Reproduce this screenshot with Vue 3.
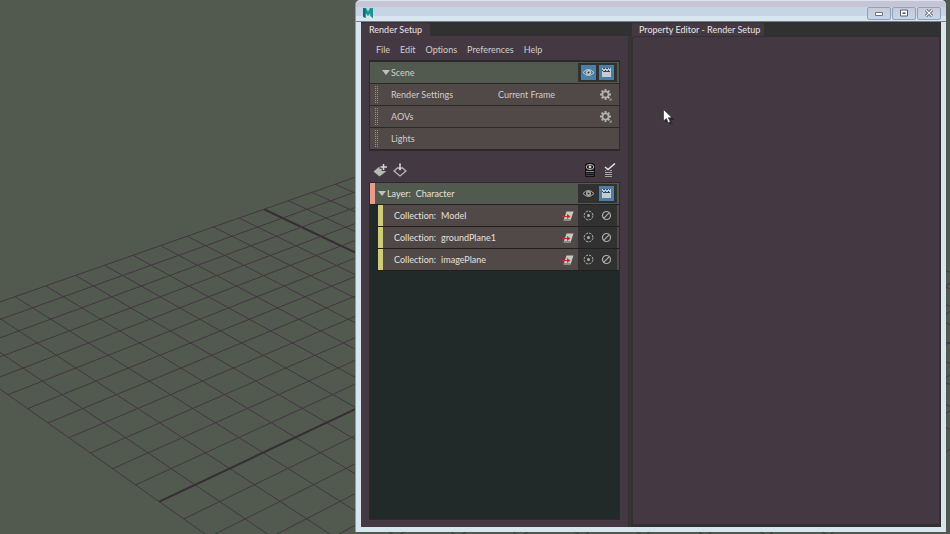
<script setup>
import { ref } from 'vue'

// Ground plane: 24 x 24 units seen in perspective. u and v are unit indices.
function project(u, v) {
  const w = 1 + 0.017195 * u + 0.016437 * v
  const x = (117.25 * u - 64.46 * v + 478) / w / 3
  const y = (-33.33 * u - 33.79 * v + 1055) / w / 3 + 150
  return [x, y]
}

function segment(u1, v1, u2, v2) {
  const [x1, y1] = project(u1, v1)
  const [x2, y2] = project(u2, v2)
  return { x1, y1, x2, y2 }
}

const gridLines = []
for (let i = 0; i <= 24; i++) {
  gridLines.push({ ...segment(i, -12, i, 12), axis: i === 12 })
  gridLines.push({ ...segment(0, i - 12, 24, i - 12), axis: i === 12 })
}

const menus = ['File', 'Edit', 'Options', 'Preferences', 'Help']
const sceneRows = [
  { name: 'Render Settings', value: 'Current Frame', gear: true },
  { name: 'AOVs', value: '', gear: true },
  { name: 'Lights', value: '', gear: false }
]
const collections = ['Model', 'groundPlane1', 'imagePlane']

const sceneOpen = ref(true)
const layerOpen = ref(true)
const sceneVisible = ref(true)
const sceneRenderable = ref(true)
const layerVisible = ref(false)
const layerRenderable = ref(true)
</script>

<template>
  <div class="desktop">
    <svg class="viewport" viewBox="0 0 950 534" preserveAspectRatio="xMinYMin slice" aria-hidden="true">
      <line
        v-for="(l, i) in gridLines"
        :key="i"
        :x1="l.x1"
        :y1="l.y1"
        :x2="l.x2"
        :y2="l.y2"
        :class="{ axis: l.axis }"
      />
    </svg>

    <svg class="defs" width="0" height="0" aria-hidden="true">
      <symbol id="eye" viewBox="0 0 13 13">
        <path d="M1 6.500 Q6.500 0.500 12 6.500 Q6.500 12.500 1 6.500Z" fill="none" stroke="currentColor" />
        <circle cx="6.500" cy="6.500" r="2.500" fill="currentColor" />
        <circle cx="6.500" cy="6.500" r="1.100" fill="#333" />
      </symbol>
      <symbol id="clapper" viewBox="0 0 13 13">
        <path d="M2 2h9v9H2z" fill="currentColor" />
        <path d="M3 2h2v1H3zM6 2h2v1H6zM9 2h1v1H9zM2 4h1v1H2zM5 4h1v1H5zM8 4h1v1H8zM3 5h7v1H3z" fill="#2c4a66" />
      </symbol>
      <symbol id="gear" viewBox="0 0 14 14">
        <circle cx="6.500" cy="6.500" r="3.100" fill="none" stroke="currentColor" stroke-width="1.800" />
        <path
          d="M6.500 1v2M6.500 10v2M1 6.500h2M10 6.500h2M2.600 2.600l1.400 1.400M9 9l1.400 1.400M2.600 10.400L4 9M9 4l1.400-1.400"
          stroke="currentColor"
          stroke-width="1.800"
        />
        <path d="M12.500 10v2.500H10z" fill="currentColor" />
      </symbol>
      <symbol id="sheet" viewBox="0 0 12 12">
        <path d="M4.500 1.500h7L8.500 10.500h-7z" fill="#c9c9c4" />
        <path d="M2 9.500h6.500" stroke="#8b8b86" />
        <path d="M0 6.500h6" stroke="#c2302b" />
        <path d="M5 4l3.500 2.500L5 9z" fill="#c2302b" />
      </symbol>
      <symbol id="isolate" viewBox="0 0 13 13">
        <circle cx="6.500" cy="6.500" r="4.400" fill="none" stroke="currentColor" stroke-dasharray="2.450 1" />
        <circle cx="6.500" cy="6.500" r="1.500" fill="currentColor" />
      </symbol>
      <symbol id="disable" viewBox="0 0 13 13">
        <circle cx="6.500" cy="6.500" r="4" fill="none" stroke="currentColor" stroke-width="1.200" />
        <path d="M3.700 9.300l5.600-5.600" stroke="currentColor" stroke-width="1.200" />
      </symbol>
    </svg>

    <main class="window">
      <header class="titlebar">
        <svg class="logo" viewBox="0 0 12 12" role="img" aria-label="Application">
          <path d="M1 1h3l2 3.500L8 1h3v10L8.500 9V6L6 9 3.500 6v5L1 9.500z" fill="#159a98" />
          <path d="M1 1h2.500v10L1 9.500z" fill="#0b6f75" />
          <path d="M8.500 5l2.500-4v10L8.500 9z" fill="#1f8f90" />
        </svg>
        <div class="window-buttons">
          <button type="button" aria-label="Minimize">
            <svg viewBox="0 0 12 8"><path d="M2.500 3.500h7v3h-7z" fill="#fff" stroke="#6b7480" /></svg>
          </button>
          <button type="button" aria-label="Maximize">
            <svg viewBox="0 0 12 8"><path d="M2.500 1h7v6h-7z" fill="#fff" stroke="#555d68" /><path d="M4.500 3.500h3v1.500h-3z" fill="#444b55" /></svg>
          </button>
          <button type="button" aria-label="Close">
            <svg viewBox="0 0 12 8"><path d="M3 1l6 6M9 1L3 7" stroke="#555d68" stroke-width="3" /><path d="M3 1l6 6M9 1L3 7" stroke="#fff" stroke-width="1.200" /></svg>
          </button>
        </div>
      </header>

      <div class="panes">
        <section class="pane">
          <div class="tabs"><h2 class="tab">Render Setup</h2></div>
          <div class="setup">
            <nav class="menubar">
              <button v-for="m in menus" :key="m" type="button">{{ m }}</button>
            </nav>

            <div class="box scene">
              <div class="row head scene-head">
                <button type="button" class="toggle" @click="sceneOpen = !sceneOpen">
                  <span class="arrow"></span>Scene
                </button>
                <div class="switches">
                  <button type="button" aria-label="Scene visibility" :class="{ on: sceneVisible }" @click="sceneVisible = !sceneVisible">
                    <svg><use href="#eye" /></svg>
                  </button>
                  <button type="button" aria-label="Scene renderable" :class="{ on: sceneRenderable }" @click="sceneRenderable = !sceneRenderable">
                    <svg><use href="#clapper" /></svg>
                  </button>
                </div>
              </div>
              <template v-if="sceneOpen">
                <div v-for="r in sceneRows" :key="r.name" class="row item">
                  <span class="grip"></span>
                  <span class="name">{{ r.name }}</span>
                  <span class="value">{{ r.value }}</span>
                  <button v-if="r.gear" type="button" class="gear" :aria-label="r.name + ' options'">
                    <svg><use href="#gear" /></svg>
                  </button>
                </div>
              </template>
            </div>

            <div class="toolbar">
              <button type="button" aria-label="Create layer">
                <svg viewBox="0 0 14 14">
                  <path d="M0.500 8.500L6.500 3.500l6.500 5-6.500 5z" fill="#b9bab6" />
                  <path d="M10.500 0v8M6.500 4h7.500" stroke="#443943" stroke-width="3.600" />
                  <path d="M10.500 1v6M7.500 4h6.500" stroke="#d6d7d2" stroke-width="1.600" />
                </svg>
              </button>
              <button type="button" aria-label="Import layer">
                <svg viewBox="0 0 14 14">
                  <path d="M5 4.500L1 8l6 5 6-5-4-3.500" fill="none" stroke="#b9bab6" stroke-width="1.200" />
                  <path d="M7 0.500v6" stroke="#d6d7d2" stroke-width="1.600" />
                  <path d="M4.500 4.500h5L7 7.500z" fill="#d6d7d2" />
                </svg>
              </button>
              <span class="spring"></span>
              <button type="button" aria-label="Show visible layer">
                <svg viewBox="0 0 14 14">
                  <path d="M4 0h6l2 2v6H2V2z" fill="#141414" />
                  <ellipse cx="7" cy="4" rx="3.800" ry="2.500" fill="none" stroke="#b9b9b4" />
                  <circle cx="7" cy="4" r="1.400" fill="#d8d8d2" />
                  <path d="M2 8h10v6H2z" fill="#141414" />
                  <path d="M3 8.500h8" stroke="#8b8b86" />
                  <path d="M3 10.500h8M3 12.500h8" stroke="#45434a" />
                </svg>
              </button>
              <button type="button" aria-label="Show renderable layers">
                <svg viewBox="0 0 14 14">
                  <path d="M2 7.500h7M2 9.500h7M2 11.500h7M2 13.500h7" stroke="#a5a5a0" />
                  <path d="M2 4.500l3 2.500L12 1" fill="none" stroke="#443943" stroke-width="3" />
                  <path d="M2 4l3 2.500L12 0.500" fill="none" stroke="#e4e5df" stroke-width="1.500" />
                </svg>
              </button>
            </div>

            <div class="box layers">
              <div class="row head layer-head">
                <span class="swatch layer-swatch"></span>
                <button type="button" class="toggle" @click="layerOpen = !layerOpen">
                  <span class="arrow"></span>Layer:
                </button>
                <span class="layer-name">Character</span>
                <div class="switches">
                  <button type="button" aria-label="Layer visibility" :class="{ on: layerVisible }" @click="layerVisible = !layerVisible">
                    <svg><use href="#eye" /></svg>
                  </button>
                  <button type="button" aria-label="Layer renderable" :class="{ on: layerRenderable }" @click="layerRenderable = !layerRenderable">
                    <svg><use href="#clapper" /></svg>
                  </button>
                </div>
              </div>
              <ul v-if="layerOpen" class="collections">
                <li v-for="c in collections" :key="c" class="row collection">
                  <span class="swatch"></span>
                  <span class="kind">Collection:</span>
                  <span class="collection-name">{{ c }}</span>
                  <svg class="sheet"><use href="#sheet" /></svg>
                  <div class="switches">
                    <button type="button" :aria-label="'Isolate ' + c"><svg><use href="#isolate" /></svg></button>
                    <button type="button" :aria-label="'Disable ' + c"><svg><use href="#disable" /></svg></button>
                  </div>
                </li>
              </ul>
            </div>
          </div>
        </section>

        <div class="splitter"></div>

        <section class="pane">
          <div class="tabs"><h2 class="tab editor-tab">Property Editor - Render Setup</h2></div>
          <div class="editor"></div>
        </section>
      </div>
    </main>

    <svg class="pointer" viewBox="0 0 12 16" aria-hidden="true">
      <path d="M2 2v12l3-2 2 4 3-1-2-4h4z" fill="#222" opacity=".6" />
      <path d="M.5.5v11.500l2.800-2.500 2 4.200 2-1-2-4h3.700z" fill="#fff" stroke="#222" stroke-width=".6" />
    </svg>
  </div>
</template>

<style>
body {
  margin: 0;
  background: #525a50;
}
</style>

<style scoped>
.desktop {
  position: relative;
  height: 100vh;
  overflow: hidden;
  background: #525a50;
  font-family: Lato, "Open Sans", sans-serif;
  font-size: 9px;
  font-variant-ligatures: none;
  line-height: 12px;
  color: #d0cdcc;
}

.desktop * {
  box-sizing: border-box;
}

button {
  margin: 0;
  padding: 0;
  border: 0;
  background: none;
  color: inherit;
  font: inherit;
  font-variant-ligatures: none;
}

.viewport {
  position: absolute;
  inset: 0;
  width: 100%;
  height: 100%;
}

.viewport line {
  stroke: #42363f;
  stroke-width: 1;
}

.viewport .axis {
  stroke: #352e34;
  stroke-width: 2;
}

.defs {
  position: absolute;
}

.window {
  position: absolute;
  inset: 0 4px 2px 355px;
  display: flex;
  flex-direction: column;
  padding: 0 5px 5px;
  border: 1px solid #8f9a9e;
  border-width: 0 0 0 1px;
  border-radius: 5px 5px 0 0;
  background: #d6e5ee;
}

.titlebar {
  display: flex;
  flex: none;
  align-items: center;
  justify-content: space-between;
  height: 22px;
  margin: 0 -5px;
  padding: 3px 5px 0;
  border-top: 1px solid #d6e5ee;
  border-radius: 5px 5px 0 0;
  background: linear-gradient(#c7c4d5 0 6px, #c5d5e6 6px 15px, #d6e5ee 15px 20px, #777b8b 20px);
}

.logo {
  width: 12px;
  height: 12px;
  margin-left: 1px;
}

.window-buttons {
  display: flex;
  gap: 1px;
}

.window-buttons button {
  display: grid;
  place-items: center;
  width: 24px;
  height: 13px;
  border: 1px solid #8fa3bd;
  border-radius: 2px;
  background: linear-gradient(#c9c9da, #c5d5e6);
}

.window-buttons svg {
  width: 12px;
  height: 8px;
}

.panes {
  display: grid;
  flex: 1;
  grid-template-columns: minmax(0, 267fr) 4px minmax(0, 309fr);
  min-height: 0;
  background: #443943;
}

.pane {
  display: flex;
  flex-direction: column;
}

.tabs {
  display: flex;
  flex: none;
  height: 14px;
  background: #313131;
}

.tab {
  margin: 1px 0 0;
  padding: 0 8px;
  border-radius: 2px 2px 0 0;
  background: #443943;
  color: #e8e5e6;
  font-size: 9px;
  font-weight: 400;
  line-height: 13px;
  white-space: nowrap;
}

.editor-tab {
  padding: 0 4px 0 7px;
}

.splitter {
  border: solid #313131;
  border-width: 14px 1px 0;
  background: #3b333a;
}

.setup {
  display: flex;
  flex: 1;
  flex-direction: column;
  padding: 6px 8px 7px;
}

.editor {
  flex: 1;
  border: 2px solid #313131;
  border-width: 1px 2px 3px 1px;
  border-radius: 3px 0 0 0;
}

.menubar {
  display: flex;
  gap: 10px;
  height: 18px;
  padding-left: 7px;
}

.menubar button {
  height: 16px;
}

.box {
  border: 1px solid #2b2b2c;
  background: #29292a;
}

.scene {
  padding-top: 1px;
}

.row {
  display: flex;
  align-items: center;
  height: 21px;
  margin-bottom: 1px;
  background: #514948;
}

.head {
  background: #525a50;
}

.toggle {
  display: flex;
  align-items: center;
  gap: 1px;
}

.arrow {
  border: 4px solid transparent;
  border-top: 5px solid #bfc1bb;
  border-bottom: 0;
}

.scene-head .toggle {
  padding-left: 12px;
}

.switches {
  display: flex;
  align-items: center;
  gap: 3px;
  height: 19px;
  margin-left: auto;
  margin-right: 2px;
  padding: 0 3px;
  background: #313131;
  color: #b1afac;
}

.switches button {
  display: grid;
  place-items: center;
  width: 15px;
  height: 15px;
}

.switches .on {
  background: #4a80a8;
  color: #c6cdd2;
}

.switches svg {
  width: 13px;
  height: 13px;
}

.item {
  padding: 0 6px 0 5px;
}

.grip {
  width: 3px;
  height: 17px;
  background: conic-gradient(transparent 75%, #99928e 0) 0 0 / 2px 2px;
}

.name {
  width: 120px;
  padding-left: 13px;
}

.gear {
  margin-left: auto;
  height: 14px;
  color: #b4b2ae;
}

.gear svg {
  display: block;
  width: 14px;
  height: 14px;
}

.toolbar {
  display: flex;
  align-items: center;
  gap: 6px;
  height: 31px;
  padding: 7px 3px 0 4px;
}

.toolbar button,
.toolbar svg {
  display: block;
  width: 14px;
  height: 14px;
}

.spring {
  flex: 1;
}

.layers {
  flex: 1;
  background: #222a29;
}

.swatch {
  align-self: stretch;
  width: 5px;
  background: #cfcb78;
}

.layer-swatch {
  background: #e89a8d;
}

.layer-head {
  box-shadow: 0 1px #202020;
}

.layer-head .toggle {
  padding-left: 3px;
  color: #e3e0df;
}

.layer-name {
  padding-left: 5px;
  color: #e3e0df;
}

.collections {
  margin: 0;
  padding: 0 0 0 8px;
  list-style: none;
}

.collection {
  color: #e3e0df;
  box-shadow: 0 1px #202020;
}

.kind {
  padding-left: 11px;
}

.collection-name {
  padding-left: 5px;
}

.sheet {
  width: 12px;
  height: 12px;
  margin-left: auto;
}

.collection .switches {
  height: 21px;
  margin-left: 4px;
}

.pointer {
  position: absolute;
  top: 109px;
  left: 663px;
  width: 12px;
  height: 16px;
}
</style>
